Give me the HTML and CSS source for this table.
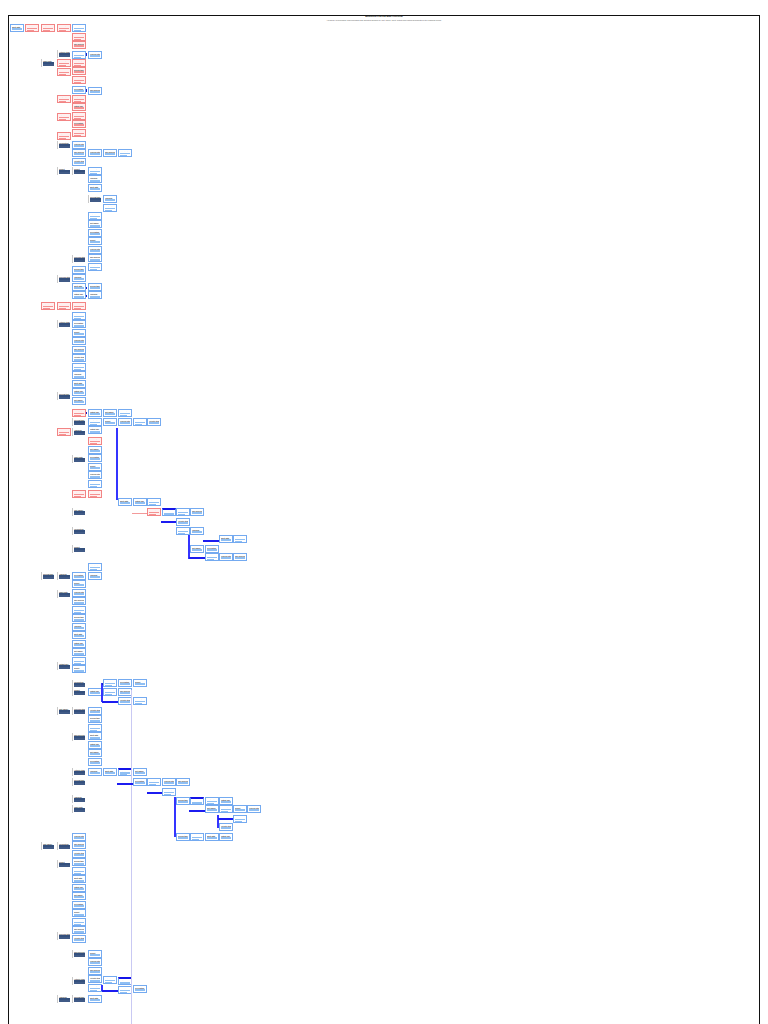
FILE: index.html
```html
<!DOCTYPE html>
<html lang="en">
<head>
<meta charset="utf-8">
<title>Process map</title>
<link rel="stylesheet" href="styles.css">
</head>
<body>
<div class="frame">
  <header class="head">
    <div class="title">Business Process Map Overview</div>
    <div class="sub">Hierarchy of processes, sub-processes and activities grouped by unit, owner, input, output and related documents for the planning period</div>
  </header>
  <div class="canvas" id="canvas"></div>
</div>
<script src="script.js"></script>
</body>
</html>
```

FILE: styles.css
```css
html, body {
  margin: 0;
  padding: 0;
  background: #ffffff;
  font-family: "Liberation Sans", Arial, sans-serif;
}

.frame {
  margin: 15px 8px 0 8px;
  width: 752px;
  height: 1020px;
  box-sizing: border-box;
  border: 1.5px solid #111111;
  border-bottom: none;
  overflow: hidden;
}

.head {
  height: 6px;
  display: flex;
  flex-direction: column;
  align-items: center;
}

.title {
  font-size: 2.4px;
  line-height: 2.6px;
  font-weight: bold;
  color: #222222;
  white-space: nowrap;
}

.sub {
  font-size: 1.9px;
  line-height: 2.6px;
  color: #555555;
  white-space: nowrap;
}

.canvas {
  position: relative;
  height: 1000px;
}

.node {
  position: absolute;
  width: 14px;
  height: 8.4px;
  box-sizing: border-box;
  padding: 1px 1px 0 1px;
  display: flex;
  flex-direction: column;
  gap: 0.8px;
  overflow: hidden;
}

.node .t {
  font-size: 1.8px;
  line-height: 2px;
  font-weight: bold;
  color: #3a3a3a;
  white-space: nowrap;
  overflow: hidden;
}

.node .bar {
  display: block;
  height: 1.8px;
  background: #8fbff3;
}

.node .bar.thin {
  height: 0.9px;
  width: 70%;
}

.b {
  border: 1px solid #74aaf0;
  background: #ffffff;
}

.r {
  border: 1px solid #f28484;
  background: #fff0f0;
}

.r .bar {
  background: #f59292;
}

.d {
  border-left: 0.6px solid #c9c9c9;
  padding-left: 1.4px;
  gap: 0.6px;
}

.d .bar {
  height: 1.8px;
  background: #34507d;
}

.d .bar.thin {
  height: 1.2px;
  width: 100%;
  background: #405a86;
}

.node.top {
  border-top: 2px solid #1414e8;
}

.ln {
  position: absolute;
  background: #2f2fff;
}

.ln.thin {
  background: #3434ff;
}

.ln.thick {
  background: #1c1cf0;
}

.ln.red {
  background: #f39a9a;
}

.ln.faint {
  background: #c9c9f3;
}

.ln.mark {
  background: #1c1cc8;
}
```

FILE: script.js
```js
(function () {
  var X = { A: 10, A2: 25, B: 41, C: 57, D: 72, E: 88, F: 103, G: 118, H: 133, I: 147, J: 162, K: 176, L: 190, M: 205, N: 219, O: 233, P: 247 };
  var OX = 9.5, OY = 22.5;
  var canvas = document.getElementById('canvas');
  var labels = ['Process step', 'Sub process', 'Activity item', 'Review task', 'Approval', 'Input data', 'Output doc', 'Unit owner', 'Verification', 'Report'];
  var li = 0;

  function node(col, y, type, extra) {
    var el = document.createElement('div');
    el.className = 'node ' + type + (extra ? ' ' + extra : '');
    el.style.left = (X[col] - OX) + 'px';
    el.style.top = (y - OY) + 'px';
    var t = document.createElement('span');
    t.className = 't';
    t.textContent = labels[li++ % labels.length];
    el.appendChild(t);
    var bar = document.createElement('i');
    bar.className = 'bar';
    el.appendChild(bar);
    if (type !== 'b' || li % 3 === 0) {
      var b2 = document.createElement('i');
      b2.className = 'bar thin';
      el.appendChild(b2);
    }
    canvas.appendChild(el);
  }

  function stack(col, y0, y1, type) {
    for (var y = y0; y <= y1 - 6; y += 8.5) node(col, y, type);
  }

  function line(x, y, w, h, cls) {
    var el = document.createElement('div');
    el.className = 'ln ' + cls;
    el.style.left = (x - OX) + 'px';
    el.style.top = (y - OY) + 'px';
    el.style.width = w + 'px';
    el.style.height = h + 'px';
    canvas.appendChild(el);
  }

  var singles = (
    'A:24:b A2:24:r B:24:r C:24:r D:24:b ' +
    'E:51:b E:87:b ' +
    'C:50:d C:59:r C:68:r C:95:r C:113:r C:132:r C:141:d C:167:d C:275:d C:302:r C:320:d C:392:d C:428:r ' +
    'B:59:d B:302:r ' +
    'D:51:b D:86:b D:167:d D:255:d D:302:r D:409:r D:418:d D:428:d D:455:d D:490:r D:508:d D:527:d D:545:d ' +
    'E:149:b F:149:b G:149:b ' +
    'E:195:d F:195:b F:204:b ' +
    'E:409:b F:409:b G:409:b F:418:b G:418:b H:418:b I:418:b ' +
    'E:437:r E:490:r ' +
    'G:498:b H:498:b I:498:b I:508:r J:508:b:top K:508:b L:508:b K:518:b K:527:b L:527:b N:535:b O:535:b L:545:b M:545:b M:553:b N:553:b O:553:b ' +
    'E:563:b ' +
    'B:572:d C:572:d C:590:d C:662:d C:707:d ' +
    'D:680:d D:688:d D:707:d D:733:d D:768:d D:778:d D:795:d D:805:d ' +
    'E:688:b F:679:b G:679:b H:679:b F:688:b G:688:b G:697:b H:697:b ' +
    'E:768:b F:768:b G:768:b:top H:768:b H:778:b I:778:b J:778:b K:778:b J:788:b ' +
    'K:797:b L:797:b:top M:797:b N:797:b M:805:b N:805:b O:805:b P:805:b O:815:b N:823:b K:833:b L:833:b M:833:b N:833:b ' +
    'B:842:d C:842:d C:860:d C:932:d ' +
    'D:950:d D:977:d D:995:d C:995:d ' +
    'E:995:b F:976:b G:977:b:top H:985:b G:986:b'
  ).split(' ');

  var stacks = [
    ['D', 33, 50, 'r'], ['D', 59, 85, 'r'], ['D', 95, 140, 'r'], ['D', 141, 166, 'b'],
    ['D', 266, 300, 'b'], ['D', 312, 408, 'b'], ['D', 572, 678, 'b'], ['D', 833, 948, 'b'],
    ['E', 167, 193, 'b'], ['E', 212, 277, 'b'], ['E', 283, 300, 'b'],
    ['E', 418, 436, 'b'], ['E', 446, 489, 'b'], ['E', 707, 768, 'b'], ['E', 950, 993, 'b'],
    ['E', 572, 580, 'b']
  ];

  stacks.forEach(function (s) { stack(s[0], s[1], s[2], s[3]); });
  singles.forEach(function (s) {
    var p = s.split(':');
    node(p[0], parseFloat(p[1]), p[2], p[3]);
  });

  var lines = [
    [131, 690, 0.8, 340, 'faint'],
    [116.5, 428, 1.6, 72, 'thin'],
    [132, 513, 15, 1, 'red'],
    [161, 521, 15, 2, 'thick'],
    [188.5, 535, 1.6, 24, 'thin'],
    [203, 540, 16, 2, 'thick'],
    [189, 557.5, 16, 2, 'thick'],
    [101.5, 683, 1.6, 19, 'thin'],
    [102, 701, 16, 2, 'thick'],
    [117, 783, 16, 2, 'thick'],
    [147, 792, 15, 2, 'thick'],
    [174.5, 797, 1.6, 40, 'thin'],
    [189, 810, 16, 2, 'thick'],
    [217.5, 815, 1.6, 13, 'thin'],
    [218, 818, 15, 2, 'thick'],
    [101.5, 985, 1.6, 6, 'thin'],
    [102, 990, 16, 2, 'thick'],
    [86, 53.5, 1.5, 2.5, 'mark'],
    [86, 89.5, 1.5, 2.5, 'mark'],
    [86, 287, 1.5, 2.5, 'mark'],
    [86, 295, 1.5, 2.5, 'mark'],
    [86, 412, 1.5, 2.5, 'mark'],
    [102, 683, 1.5, 2.5, 'mark']
  ];
  lines.forEach(function (l) { line(l[0], l[1], l[2], l[3], l[4]); });
})();
```
